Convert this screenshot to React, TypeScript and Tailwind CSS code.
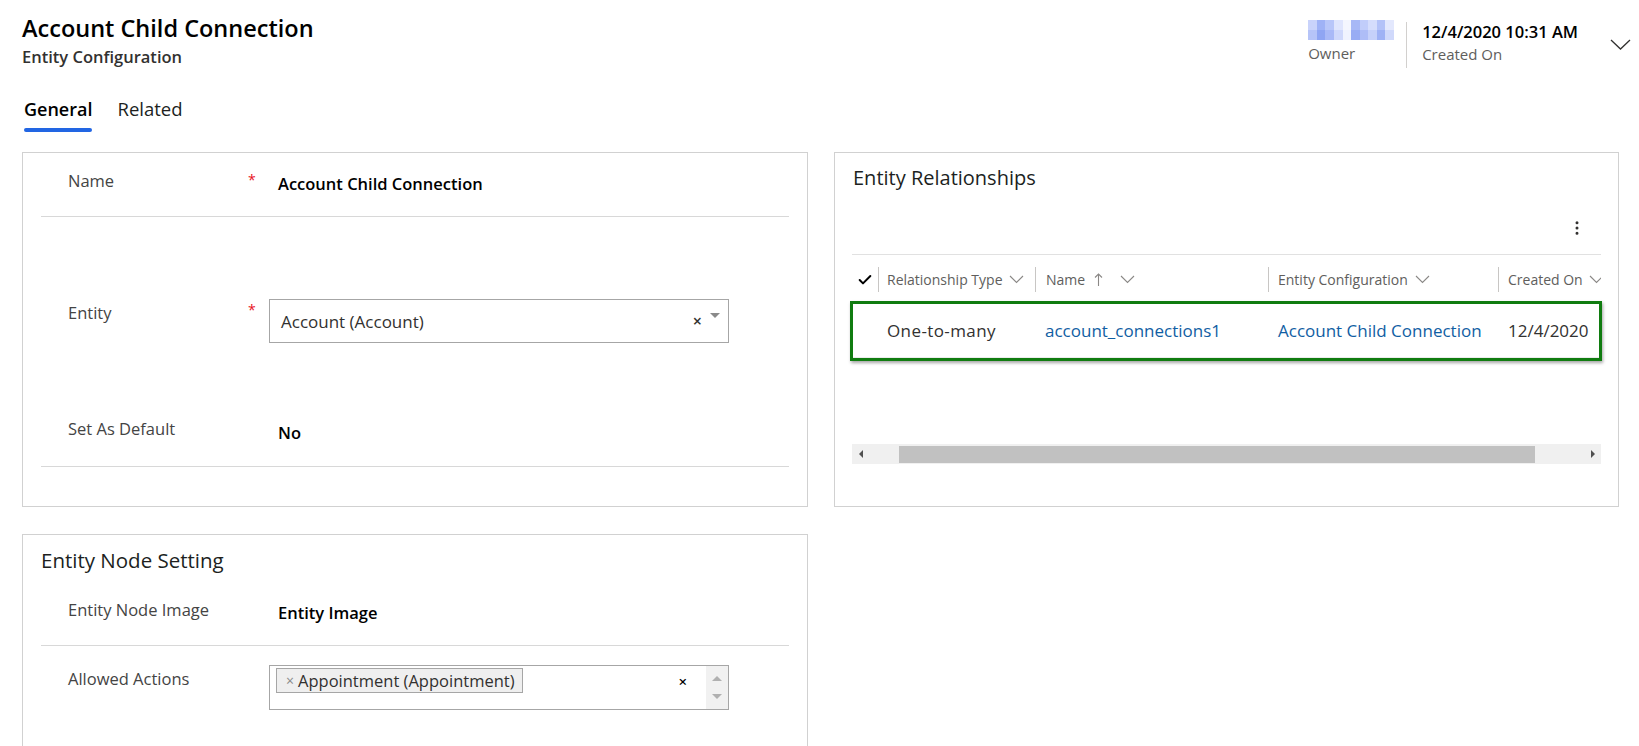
import { Check, MoreVertical } from 'lucide-react';

const blurCells = [
  ['#c9d3fb', '#9fb2f6', '#b8c6f9', '#dfe5fd', '#f4f6fe', '#a7b8f6', '#c1cdfa', '#d5ddfc', '#b3c2f8', '#e3e8fd'],
  ['#b6c4f8', '#8fa5f3', '#a9b9f7', '#cfd8fb', '#f0f3fe', '#98acf4', '#aebdf7', '#c6d1fa', '#9fb2f5', '#d0d9fb'],
];

function BlurredName() {
  return (
    <div className="flex flex-col w-[86px] h-[20px] overflow-hidden">
      {blurCells.map((row, i) => (
        <div key={i} className="flex h-[10px]">
          {row.map((c, j) => (
            <div key={j} className="h-[10px] flex-1" style={{ backgroundColor: c }} />
          ))}
        </div>
      ))}
    </div>
  );
}

function Label({ children }: { children: React.ReactNode }) {
  return <div className="w-[180px] text-[16.5px] leading-[22px] text-[#444]">{children}</div>;
}

// thin fluent-style chevron used in grid headers
function HeadChevron({ className = '' }: { className?: string }) {
  return (
    <svg className={className} width="15" height="9" viewBox="0 0 15 9" fill="none">
      <polyline points="1,1 7.5,7.5 14,1" stroke="#8a8886" strokeWidth="1.1" />
    </svg>
  );
}

export default function App() {
  return (
    <div className="w-[1639px] h-[746px] overflow-hidden bg-white font-['Open_Sans',sans-serif] text-[#201f1e]">
      {/* header */}
      <div className="flex justify-between">
        <div className="pl-[22px] pt-[12px]">
          <h1 className="text-[23.5px] leading-[32px] font-semibold text-black">Account Child Connection</h1>
          <div className="mt-[2px] text-[16.5px] leading-[22px] font-semibold text-[#323130]">Entity Configuration</div>
        </div>
        <div className="flex items-start pt-[19px] pr-[8px]">
          <div className="flex flex-col pr-[12px] pt-[1px]">
            <BlurredName />
            <span className="text-[15px] leading-[20px] text-[#605e5c] mt-[3px]">Owner</span>
          </div>
          <div className="w-px h-[46px] bg-[#d2d0ce] mt-[3px]" />
          <div className="flex flex-col pl-[15px] pt-[2px]">
            <span className="text-[16.5px] leading-[22px] font-semibold text-black">12/4/2020 10:31 AM</span>
            <span className="text-[15px] leading-[20px] text-[#605e5c] mt-[1px]">Created On</span>
          </div>
          <svg className="ml-[32px] mt-[20px]" width="21" height="11" viewBox="0 0 21 11" fill="none">
            <polyline points="1,1 10.5,10 20,1" stroke="#323130" strokeWidth="1.3" />
          </svg>
        </div>
      </div>

      {/* tabs */}
      <div className="flex gap-[25px] pl-[24px] mt-[29px]">
        <div className="flex flex-col">
          <span className="text-[18px] leading-[24px] font-semibold text-black">General</span>
          <div className="h-[4px] rounded-full bg-[#2266e3] mt-[7px]" />
        </div>
        <span className="text-[18.5px] leading-[24px] text-[#201f1e]">Related</span>
      </div>

      {/* body */}
      <div className="flex gap-[26px] pl-[22px] mt-[20px]">
        <div className="flex flex-col gap-[27px]">
          {/* General card */}
          <div className="w-[786px] h-[355px] border border-[#d1d1d1] px-[18px]">
            <div className="h-[64px] flex items-start pt-[17px] border-b border-[#d8d8d8] pl-[27px]">
              <Label>Name</Label>
              <span className="w-[21px] text-[#e81123] text-[14px] leading-[14px] pt-[3px]">*</span>
              <span className="pl-[9px] text-[16.5px] leading-[22px] font-semibold text-black mt-[3px]">Account Child Connection</span>
            </div>
            <div className="flex items-start pl-[27px] pt-[82px]">
              <div className="mt-[3px]"><Label>Entity</Label></div>
              <span className="w-[21px] text-[#e81123] text-[14px] leading-[14px] mt-[4px]">*</span>
              <div className="w-[460px] h-[44px] border border-[#a6a6a6] flex items-center pl-[11px] pr-[8px] relative">
                <span className="text-[17px] text-[#323130] mt-[2px]">Account (Account)</span>
                <span className="ml-auto mr-[18px] text-[16px] font-semibold text-[#323130]">×</span>
                <span className="absolute right-[8px] top-[13px] w-0 h-0 border-l-[5px] border-r-[5px] border-t-[5px] border-l-transparent border-r-transparent border-t-[#8a8a8a]" />
              </div>
            </div>
            <div className="flex items-start pl-[27px] pt-[75px] pb-[22px] border-b border-[#d8d8d8]">
              <Label>Set As Default</Label>
              <span className="w-[21px]" />
              <span className="pl-[9px] text-[16.5px] leading-[22px] font-semibold text-black mt-[4px]">No</span>
            </div>
          </div>

          {/* Entity Node Setting card */}
          <div className="w-[786px] h-[260px] border border-[#d1d1d1] px-[18px] pt-[11px]">
            <div className="text-[20.5px] leading-[28px] text-[#201f1e]">Entity Node Setting</div>
            <div className="flex items-start pl-[27px] pt-[25px] pb-[21px] border-b border-[#d8d8d8]">
              <Label>Entity Node Image</Label>
              <span className="w-[21px]" />
              <span className="pl-[9px] text-[16.5px] leading-[22px] font-semibold text-black mt-[3px]">Entity Image</span>
            </div>
            <div className="flex items-start pl-[27px] pt-[19px]">
              <div className="mt-[3px]"><Label>Allowed Actions</Label></div>
              <span className="w-[21px]" />
              <div className="w-[460px] h-[45px] border border-[#a6a6a6] flex">
                <div className="flex-1 flex items-start pl-[6px] pt-[2px]">
                  <div className="flex items-center h-[25px] border border-[#a6a6a6] bg-[#efefef] pl-[9px] pr-[7px]">
                    <span className="text-[14px] text-[#8a8a8a] mr-[4px]">×</span>
                    <span className="text-[16.5px] leading-[22px] text-[#323130]">Appointment (Appointment)</span>
                  </div>
                  <span className="ml-auto mr-[19px] mt-[2px] text-[15px] font-semibold text-black">×</span>
                </div>
                <div className="w-[22px] bg-[#f1f1f1] flex flex-col items-center justify-between py-[10px]">
                  <span className="w-0 h-0 border-l-[5px] border-r-[5px] border-b-[5px] border-l-transparent border-r-transparent border-b-[#b0b0b0]" />
                  <span className="w-0 h-0 border-l-[5px] border-r-[5px] border-t-[5px] border-l-transparent border-r-transparent border-t-[#b0b0b0]" />
                </div>
              </div>
            </div>
          </div>
        </div>

        {/* Entity Relationships card */}
        <div className="w-[785px] h-[355px] border border-[#d1d1d1] px-[17px] pt-[11px] self-start">
          <div className="text-[20px] leading-[28px] text-[#201f1e] pl-[1px]">Entity Relationships</div>
          <div className="flex justify-end h-[63px] items-center pr-[15px] pt-[10px] border-b border-[#e1e1e1]">
            <MoreVertical className="w-[18px] h-[18px] text-[#323130]" strokeWidth={2} />
          </div>
          <div className="flex items-center h-[46px] pt-[3px] text-[14px] text-[#605e5c]">
            <div className="w-[26px] flex justify-center">
              <Check className="w-[16px] h-[16px] text-black" strokeWidth={3} />
            </div>
            <div className="w-[157px] h-[25px] border-l border-[#c8c6c4] flex items-center pl-[8px] gap-[6px]">
              <span>Relationship Type</span>
              <HeadChevron />
            </div>
            <div className="w-[233px] h-[25px] border-l border-[#c8c6c4] flex items-center pl-[10px]">
              <span>Name</span>
              <svg className="ml-[9px]" width="9" height="13" viewBox="0 0 9 13" fill="none">
                <polyline points="1,4.5 4.5,1 8,4.5" stroke="#8a8886" strokeWidth="1.1" />
                <line x1="4.5" y1="1" x2="4.5" y2="13" stroke="#8a8886" strokeWidth="1.1" />
              </svg>
              <HeadChevron className="ml-[17px]" />
            </div>
            <div className="w-[230px] h-[25px] border-l border-[#c8c6c4] flex items-center pl-[9px] gap-[7px]">
              <span>Entity Configuration</span>
              <HeadChevron />
            </div>
            <div className="flex-1 h-[25px] border-l border-[#c8c6c4] flex items-center pl-[9px] gap-[6px] overflow-hidden whitespace-nowrap">
              <span>Created On</span>
              <HeadChevron className="shrink-0" />
            </div>
          </div>
          <div className="h-[60px] border-[3px] border-[#107c10] shadow-[1px_2px_3px_rgba(0,0,0,0.35)] flex items-center text-[17px] -ml-[2px] -mr-[1px]">
            <div className="flex items-center w-full h-full border-b border-[#ececec]">
              <span className="w-[180px] pl-[34px] text-[#323130] tracking-[0.4px]">One-to-many</span>
              <span className="w-[233px] pl-[12px] text-[#115ea3]">account_connections1</span>
              <span className="w-[230px] pl-[12px] text-[#115ea3] whitespace-nowrap">Account Child Connection</span>
              <span className="pl-[12px] text-[#323130]">12/4/2020</span>
            </div>
          </div>
          <div className="mt-[83px] h-[20px] bg-[#f0f0f0] flex items-center">
            <div className="w-[47px] flex justify-start pl-[7px]">
              <span className="w-0 h-0 border-t-[4px] border-b-[4px] border-r-[4px] border-t-transparent border-b-transparent border-r-[#505050]" />
            </div>
            <div className="w-[636px] h-[17px] bg-[#c1c1c1]" />
            <div className="flex-1 flex justify-end pr-[6px]">
              <span className="w-0 h-0 border-t-[4px] border-b-[4px] border-l-[4px] border-t-transparent border-b-transparent border-l-[#505050]" />
            </div>
          </div>
        </div>
      </div>
    </div>
  );
}
